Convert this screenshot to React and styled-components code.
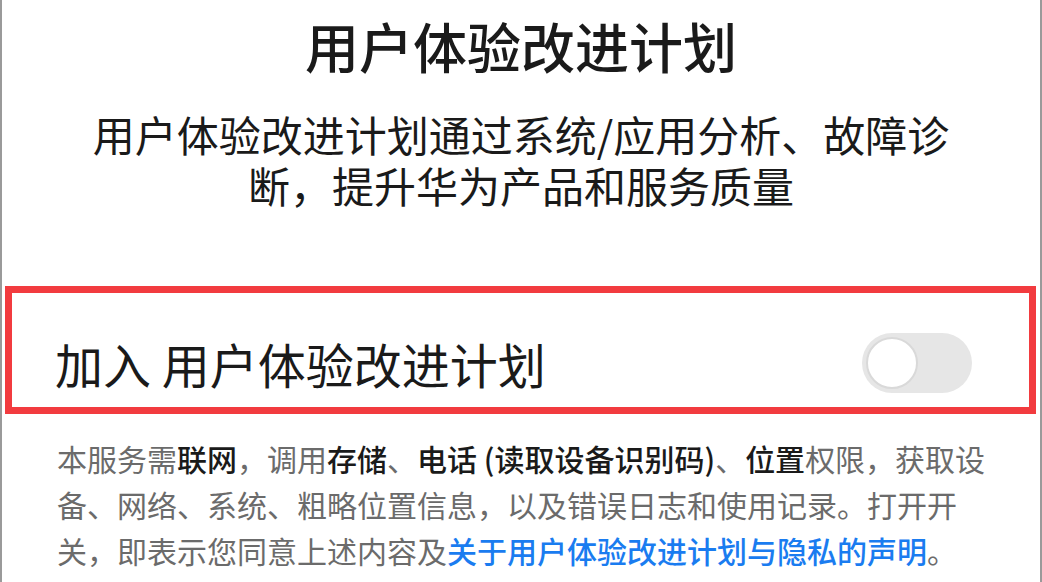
import React, { useState } from "react";
import styled, { createGlobalStyle } from "styled-components";

const GlobalStyle = createGlobalStyle`
  html, body {
    margin: 0;
    padding: 0;
    background: #ffffff;
  }
  body {
    font-family: "Noto Sans CJK SC", "Noto Sans", sans-serif;
  }
`;

const Page = styled.div`
  width: 1042px;
  height: 582px;
  box-sizing: border-box;
  border-left: 2px solid #9a9a9a;
  border-right: 2px solid #9a9a9a;
  overflow: hidden;
  display: flex;
  flex-direction: column;
  align-items: stretch;
`;

const Title = styled.h1`
  margin: 14px 0 0;
  font-size: 54px;
  line-height: 64px;
  font-weight: 500;
  color: #1a1a1a;
  text-align: center;
`;

const Intro = styled.p`
  margin: 30px 70px 0;
  font-size: 42px;
  line-height: 51px;
  font-weight: 400;
  color: #1a1a1a;
  text-align: center;
`;

const Highlight = styled.div`
  margin: 76px 4px 0 3px;
  height: 128px;
  box-sizing: border-box;
  border: 7px solid #f23b3f;
  display: flex;
  align-items: center;
  justify-content: space-between;
  padding: 26px 57px 0 43px;
`;

const Label = styled.span`
  font-size: 48px;
  line-height: 56px;
  color: #1a1a1a;
`;

const Switch = styled.button`
  position: relative;
  width: 110px;
  height: 60px;
  border: none;
  border-radius: 30px;
  padding: 0;
  background: ${(p) => (p.$on ? "#1a7cf0" : "#e6e6e6")};
  cursor: pointer;
`;

const Knob = styled.span`
  position: absolute;
  top: 4px;
  left: ${(p) => (p.$on ? "54px" : "4px")};
  width: 52px;
  height: 52px;
  box-sizing: border-box;
  border-radius: 50%;
  background: #ffffff;
  border: 2px solid #d9d9d9;
`;

const Notice = styled.p`
  margin: 21px 40px 0 55px;
  font-size: 30px;
  line-height: 46px;
  color: #6b6b6b;
`;

const Strong = styled.span`
  color: #1a1a1a;
  font-weight: 500;
`;

const Link = styled.a`
  color: #1a7cf0;
  font-weight: 500;
  text-decoration: none;
`;

export default function App() {
  const [on, setOn] = useState(false);
  return (
    <>
      <GlobalStyle />
      <Page>
        <Title>用户体验改进计划</Title>
        <Intro>用户体验改进计划通过系统/应用分析、故障诊断，提升华为产品和服务质量</Intro>
        <Highlight>
          <Label>加入 用户体验改进计划</Label>
          <Switch $on={on} onClick={() => setOn(!on)} aria-label="加入用户体验改进计划">
            <Knob $on={on} />
          </Switch>
        </Highlight>
        <Notice>
          本服务需<Strong>联网</Strong>，调用<Strong>存储</Strong>、<Strong>电话 (读取设备识别码)</Strong>、<Strong>位置</Strong>权限，获取设备、网络、系统、粗略位置信息，以及错误日志和使用记录。打开开关，即表示您同意上述内容及<Link href="#">关于用户体验改进计划与隐私的声明</Link>。
        </Notice>
      </Page>
    </>
  );
}
